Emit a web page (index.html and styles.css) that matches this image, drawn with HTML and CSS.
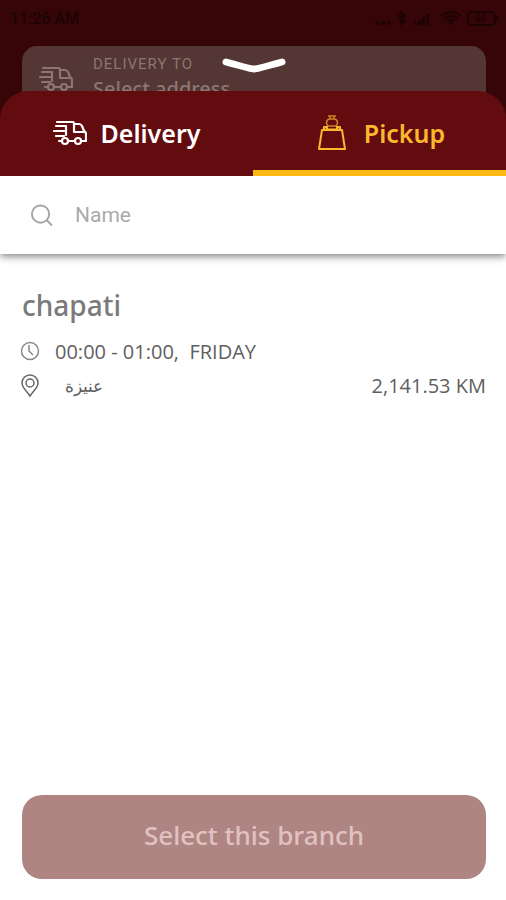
FILE: index.html
```html
<!DOCTYPE html>
<html lang="en">
<head>
<meta charset="utf-8">
<meta name="viewport" content="width=device-width, initial-scale=1">
<title>Select branch</title>
<link rel="stylesheet" href="styles.css">
</head>
<body>
<svg class="defs" aria-hidden="true">
  <symbol id="truck" viewBox="0 0 34 26">
    <g fill="none" stroke="currentColor" stroke-width="2.200" stroke-linejoin="round" stroke-linecap="round">
      <path d="M4 2H20Q21 2 21 4H26Q28 4 29 6L31 11Q33 12 33 14V21H29M21 4V12H31M21 21H16M8 21H6M3 6H13M1 11H13M3 16H11M13 6V15"/>
      <circle cx="12" cy="21" r="3"/><circle cx="25" cy="21" r="3"/>
    </g>
  </symbol>
</svg>
<div class="screen">
  <header class="backdrop">
    <div class="status">
      <span>11:26 AM</span>
      <svg class="status-icons" viewBox="0 0 128 20" aria-hidden="true">
        <g fill="currentColor"><circle cx="5" cy="15" r="2"/><circle cx="11" cy="15" r="2"/><circle cx="17" cy="15" r="2"/>
        <path d="M42 17V14H45V17ZM46 17V12H49V17ZM50 17V9H53V17ZM54 17V6H57V17Z"/><circle cx="79" cy="15" r="2"/></g>
        <g fill="none" stroke="currentColor" stroke-width="2"><path d="M69 8Q79 0 89 8M72 11Q79 5 86 11M75 13Q79 10 83 13"/><path d="M26 7L33 13L29 16V4L33 7L26 13"/><rect x="96" y="4" width="27" height="13" rx="4"/><path d="M125 8V13"/></g>
        <text x="103" y="14" font-size="10" font-weight="700" fill="currentColor">56</text>
      </svg>
    </div>
    <div class="address">
      <svg class="truck" aria-hidden="true"><use href="#truck"/></svg>
      <div class="address-text"><span class="caption">DELIVERY TO</span><span class="value">Select address</span></div>
      <button class="dismiss" aria-label="Close"><svg viewBox="0 0 66 18" aria-hidden="true"><path d="M5 5Q30 12 33 12T61 5" fill="none" stroke="#fff" stroke-width="7" stroke-linecap="round"/></svg></button>
    </div>
  </header>
  <main class="sheet">
    <nav class="tabs" aria-label="Order type">
      <button class="tab"><svg class="truck" aria-hidden="true"><use href="#truck"/></svg>Delivery</button>
      <button class="tab active"><svg class="bag" viewBox="0 0 28 36" aria-hidden="true"><g fill="none" stroke="currentColor" stroke-width="2" stroke-linejoin="round"><path d="M4 15H24L27 34H1Z"/><path d="M6 15V12H9V15M19 15V12H22V15"/><g stroke-width="1.500" opacity=".7"><path d="M10 1H18M12 1V4M16 1V4M10 11H18M9 14H19M10 11C7 8 9 4 12 4H16C19 4 21 8 18 11M8 14L10 11M20 14L18 11"/></g></g></svg>Pickup</button>
    </nav>
    <label class="search">
      <svg viewBox="0 0 24 24" aria-hidden="true"><g fill="none" stroke="currentColor" stroke-width="2"><circle cx="11" cy="11" r="9"/><path d="M17 17L23 23"/></g></svg>
      <input type="search" placeholder="Name" aria-label="Name">
    </label>
    <section class="branch">
      <h1>chapati</h1>
      <div class="row"><svg viewBox="0 0 20 24" aria-hidden="true"><g fill="none" stroke="#888" stroke-width="1.500"><circle cx="10" cy="11" r="8.500"/><path d="M9 5V11L13 15"/></g></svg><span>00:00 - 01:00,&nbsp; FRIDAY</span></div>
      <div class="row"><svg viewBox="0 0 20 24" aria-hidden="true"><g fill="none" stroke="#666" stroke-width="1.500"><path d="M10 22C7 17 2 14 2 9A8 8 0 0 1 18 9C18 14 13 17 10 22Z"/><circle cx="10" cy="9" r="4"/></g></svg><span class="city" lang="ar" dir="rtl">عنيزة</span><span class="distance">2,141.53 KM</span></div>
    </section>
    <button class="select" disabled>Select this branch</button>
  </main>
</div>
</body>
</html>
```
FILE: styles.css
```css
* { box-sizing: border-box; }
body { margin: 0; background: #fff; font-family: "Noto Sans", sans-serif; }
button { border: 0; padding: 0; background: none; font-family: inherit; }
.defs { position: absolute; width: 0; height: 0; }
.screen { display: flex; flex-direction: column; min-height: 100vh; }
.backdrop { height: 126px; margin-bottom: -35px; padding: 8px 6px 0 10px; overflow: hidden; background: #350508; }
.status { display: flex; justify-content: space-between; height: 38px; color: #1d0304; font: 500 16px/22px Roboto, sans-serif; }
.status-icons { width: 128px; height: 20px; }
.address { position: relative; display: flex; height: 88px; margin: 0 14px 0 12px; padding: 7px 17px; border-radius: 15px; background: #543635; color: #8c7572; }
.truck { width: 34px; height: 26px; }
.address .truck { margin-top: 13px; }
.address-text { display: flex; flex-direction: column; margin-left: 20px; font-family: Roboto, sans-serif; }
.caption { font-size: 15px; line-height: 22px; letter-spacing: 1px; }
.value { font: 500 20px/28px "Noto Sans", sans-serif; }
.dismiss { position: absolute; top: 11px; left: 50%; width: 66px; height: 18px; transform: translateX(-50%); }
.dismiss svg { display: block; }
.sheet { flex: 1; display: flex; flex-direction: column; }
.tabs { position: relative; display: grid; grid-template-columns: 1fr 1fr; height: 85px; border-radius: 28px 28px 0 0; overflow: hidden; background: #620c10; }
.tab { display: flex; align-items: center; justify-content: center; gap: 14px; border-bottom: 6px solid transparent; padding-top: 4px; color: #fff; font-size: 25px; font-weight: 600; line-height: 34px; }
.tab.active { gap: 18px; border-color: #fdb913; padding-left: 4px; color: #fbb72e; }
.bag { width: 28px; height: 36px; }
.search { display: flex; align-items: center; gap: 22px; height: 78px; padding: 0 30px; background: #fff; box-shadow: 0 2px 8px #0008; clip-path: inset(0 0 -16px); color: #a5a5a5; }
.search svg { width: 23px; height: 24px; }
.search input { flex: 1; min-width: 0; border: 0; padding: 0; outline: 0; background: none; color: inherit; font: 21px/28px Roboto, sans-serif; }
.search input::placeholder { color: #aaa; opacity: 1; }
.branch { padding: 31px 20px; color: #606060; }
h1 { margin: 0 0 10px 2px; color: #7a7a7a; font-size: 28px; font-weight: 500; line-height: 40px; }
.row { display: flex; align-items: center; height: 34px; font-family: "Open Sans", "Noto Sans", sans-serif; font-size: 20px; line-height: 28px; }
.row svg { width: 20px; height: 24px; margin-right: 15px; }
.city { margin-left: 10px; font-family: "Noto Sans", sans-serif; font-size: 17px; }
.distance { margin-left: auto; }
.select { height: 84px; margin: auto 20px 21px 22px; padding-bottom: 4px; border-radius: 20px; background: #ae8583; color: #e1c2c0; font-size: 26px; font-weight: 500; line-height: 34px; }
```
